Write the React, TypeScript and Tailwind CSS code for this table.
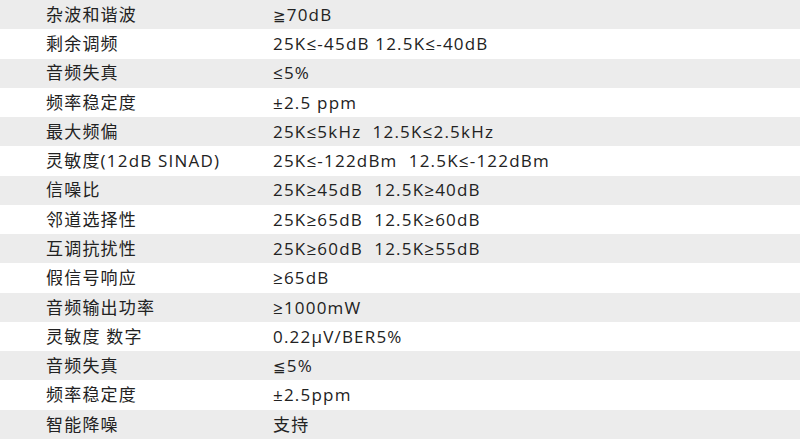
import type { ReactNode } from "react";

const Sym = ({ c }: { c: string }) => (
  <span style={{ fontFamily: '"DejaVu Sans", sans-serif' }} className="text-[15px]">
    {c}
  </span>
);

const rows: [string, ReactNode][] = [
  ["杂波和谐波", <><Sym c="≧" />70dB</>],
  ["剩余调频", "25K≤-45dB 12.5K≤-40dB"],
  ["音频失真", "≤5%"],
  ["频率稳定度", "±2.5 ppm"],
  ["最大频偏", "25K≤5kHz  12.5K≤2.5kHz"],
  ["灵敏度(12dB SINAD)", "25K≤-122dBm  12.5K≤-122dBm"],
  ["信噪比", "25K≥45dB  12.5K≥40dB"],
  ["邻道选择性", "25K≥65dB  12.5K≥60dB"],
  ["互调抗扰性", "25K≥60dB  12.5K≥55dB"],
  ["假信号响应", "≥65dB"],
  ["音频输出功率", "≥1000mW"],
  ["灵敏度 数字", "0.22μV/BER5%"],
  ["音频失真", <><Sym c="≦" />5%</>],
  ["频率稳定度", "±2.5ppm"],
  ["智能降噪", "支持"],
];

export default function App() {
  return (
    <div
      className="flex h-[439px] w-[800px] flex-col bg-white text-[17px] tracking-[1.2px] text-[#222]"
      style={{ fontFamily: '"Open Sans", "Noto Sans CJK SC", sans-serif' }}
    >
      {rows.map(([name, value], i) => (
        <div
          key={i}
          className={
            i % 2 === 0
              ? "flex flex-1 items-center bg-[#ececec]"
              : "flex flex-1 items-center bg-white"
          }
        >
          <div className="w-[273px] pl-[46px] whitespace-pre">{name}</div>
          <div className="whitespace-pre">{value}</div>
        </div>
      ))}
    </div>
  );
}
